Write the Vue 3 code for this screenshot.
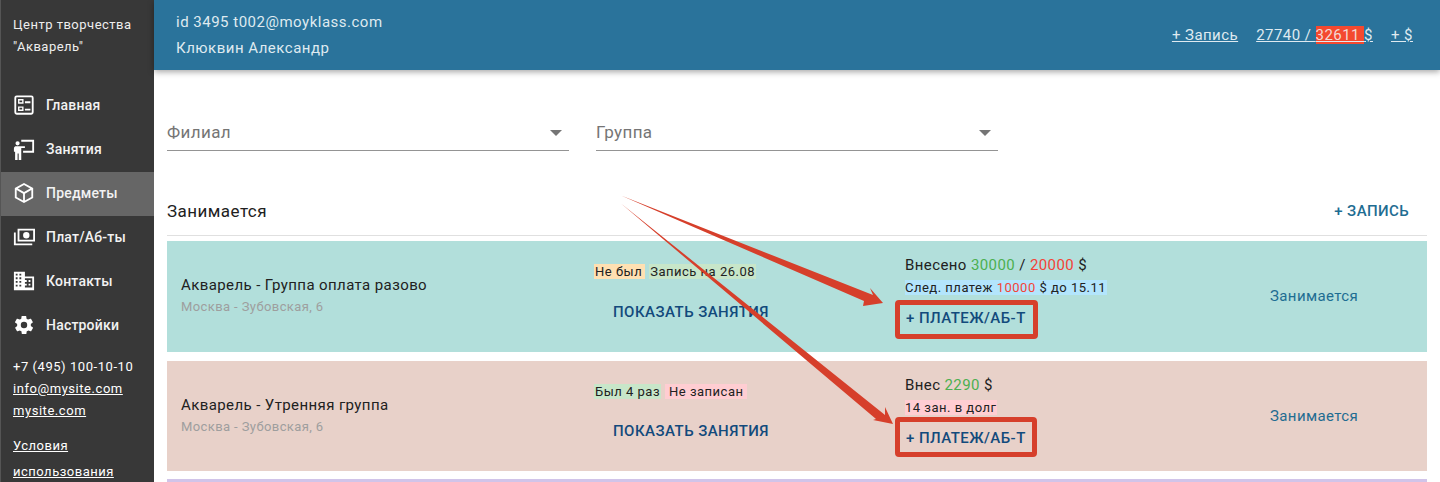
<script setup>
const nav = [
  { label: 'Главная', icon: 'home' },
  { label: 'Занятия', icon: 'lesson' },
  { label: 'Предметы', icon: 'box', active: true },
  { label: 'Плат/Аб-ты', icon: 'money' },
  { label: 'Контакты', icon: 'domain' },
  { label: 'Настройки', icon: 'gear' }
]
</script>

<template>
  <div class="app">
    <aside class="side">
      <div class="brand">Центр творчества<br>"Акварель"</div>
      <nav class="nav">
        <a v-for="n in nav" :key="n.label" class="nav-item" :class="{ active: n.active }">
          <svg class="ico" viewBox="0 0 24 24" fill="#fff">
            <path v-if="n.icon === 'home'" fill-rule="evenodd" d="M4 1.500h16A2.500 2.500 0 0 1 22.500 4v16a2.500 2.500 0 0 1-2.500 2.500H4A2.500 2.500 0 0 1 1.500 20V4A2.500 2.500 0 0 1 4 1.500zm0 2a.5.5 0 0 0-.5.5v16c0 .3.2.5.5.5h16c.3 0 .5-.2.5-.5V4c0-.3-.2-.5-.5-.5H4zM5.500 5.500h6v5h-6zm1.500 1.500v2h3V7zm-1.500 6.500h6v5h-6zm1.500 1.500v2h3v-2zm6-7h6v2h-6zm0 8h6v2h-6z"/>
            <path v-else-if="n.icon === 'lesson'" d="M9 2h14v14H11v-2h10V4H9zM5 3.500a2.300 2.300 0 1 1 0 4.600 2.300 2.300 0 0 1 0-4.600zM2.500 9h6.200l4.300-.1V11H9v13H6.200v-7H5v7H2.300v-9H1v-3.500A2.500 2.500 0 0 1 2.500 9z"/>
            <path v-else-if="n.icon === 'box'" fill-rule="evenodd" d="M12 1l10 5.500v11L12 23 2 17.500v-11L12 1zm0 2.400L5.300 7.100 12 11l6.700-3.900L12 3.400zM4 8.800v7.500l7 3.900v-7.500L4 8.800zm16 0l-7 3.900v7.500l7-3.900V8.800z"/>
            <path v-else-if="n.icon === 'money'" fill-rule="evenodd" d="M5 3h19v14H5V3zm2 2v10h15V5H7zm7.500 1.500a3.500 3.500 0 1 1 0 7 3.500 3.500 0 0 1 0-7zM1 7h2v12h18v2H1V7z"/>
            <path v-else-if="n.icon === 'domain'" fill-rule="evenodd" d="M1 2h12v5h10v15H1V2zm2 2v2h2V4H3zm4 0v2h2V4H7zm-4 4v2h2V8H3zm4 0v2h2V8H7zm-4 4v2h2v-2H3zm4 0v2h2v-2H7zm-4 4v2h2v-2H3zm4 0v2h2v-2H7zm6-7v2h2v2h-2v2h2v2h-2v2h8V9h-8zm4 2h2v2h-2v-2zm0 4h2v2h-2v-2z"/>
            <path v-else fill-rule="evenodd" d="M19.400 13c.1-.3.100-.7.100-1s0-.7-.1-1l2.100-1.600c.2-.2.2-.4.1-.6l-2-3.500c-.1-.2-.4-.3-.6-.2l-2.500 1c-.5-.4-1.100-.7-1.700-1l-.4-2.600c0-.3-.2-.4-.5-.4h-4c-.3 0-.5.100-.5.400l-.4 2.600c-.6.300-1.200.6-1.700 1l-2.500-1c-.2-.1-.5 0-.6.200l-2 3.500c-.1.200-.1.400.1.600L4.600 11c-.1.300-.1.700-.1 1s0 .7.100 1l-2.100 1.600c-.2.200-.2.400-.1.600l2 3.500c.1.200.4.300.6.200l2.500-1c.5.400 1.100.7 1.700 1l.4 2.600c0 .3.200.4.500.4h4c.3 0 .5-.1.500-.4l.4-2.600c.6-.3 1.200-.6 1.700-1l2.500 1c.2.100.5 0 .6-.2l2-3.500c.1-.2.100-.4-.1-.6L19.400 13zM12 15.500a3.500 3.500 0 1 1 0-7 3.500 3.500 0 0 1 0 7z"/>
          </svg>
          <span>{{ n.label }}</span>
        </a>
      </nav>
      <div class="contacts">
        <div>+7 (495) 100-10-10</div>
        <a>info@mysite.com</a>
        <a>mysite.com</a>
      </div>
      <div class="terms"><a>Условия</a><br><a>использования</a></div>
    </aside>

    <div class="main">
      <header class="top">
        <div class="who">
          <div>id 3495 t002@moyklass.com</div>
          <div>Клюквин Александр</div>
        </div>
        <div class="top-links">
          <a>+ Запись</a>
          <a>27740 / <span class="over">32611 </span> $</a>
          <a>+ $</a>
        </div>
      </header>

      <div class="content">
        <div class="filters">
          <div class="select">Филиал<i class="caret"></i></div>
          <div class="select">Группа<i class="caret"></i></div>
        </div>

        <div class="sec-head">
          <span>Занимается</span>
          <a class="add">+ ЗАПИСЬ</a>
        </div>

        <div class="row teal">
          <div class="c-name">
            <div class="name">Акварель - Группа оплата разово</div>
            <div class="place">Москва - Зубовская, 6</div>
          </div>
          <div class="c-tags">
            <div class="tags"><span class="tag orange">Не был</span><span class="tag green">Запись на 26.08</span></div>
            <a class="btn show">ПОКАЗАТЬ ЗАНЯТИЯ</a>
          </div>
          <div class="c-pay">
            <div class="sum">Внесено <b class="g">30000</b> / <b class="r">20000</b> $</div>
            <div class="note"><span class="blue">След. платеж <b class="r">10000</b> $ до 15.11</span></div>
            <a class="btn pay">+ ПЛАТЕЖ/АБ-Т</a>
          </div>
          <div class="status">Занимается</div>
        </div>

        <div class="row rose">
          <div class="c-name">
            <div class="name">Акварель - Утренняя группа</div>
            <div class="place">Москва - Зубовская, 6</div>
          </div>
          <div class="c-tags">
            <div class="tags"><span class="tag green">Был 4 раз</span><span class="tag pink">Не записан</span></div>
            <a class="btn show">ПОКАЗАТЬ ЗАНЯТИЯ</a>
          </div>
          <div class="c-pay">
            <div class="sum">Внес <b class="g">2290</b> $</div>
            <div class="note"><span class="pinkbg">14 зан. в долг</span></div>
            <a class="btn pay">+ ПЛАТЕЖ/АБ-Т</a>
          </div>
          <div class="status">Занимается</div>
        </div>

        <div class="row violet"></div>
      </div>
    </div>

    <svg class="marks" width="1440" height="482" viewBox="0 0 1440 482">
      <g fill="#d63f2b">
        <path d="M621 195.500L873 295 870 288 883 303 863 306 864 301z"/>
        <path d="M621 203.500L885 415 885 407 893 424 873 420 876 419z"/>
      </g>
      <g fill="none" stroke="#d63f2b" stroke-width="5">
        <rect x="897.500" y="302.500" width="138" height="34" rx="1.500"/>
        <rect x="897.500" y="419.500" width="137" height="35" rx="1.500"/>
      </g>
    </svg>
  </div>
</template>

<style>
html, body { margin: 0; background: #fff; overflow: hidden; }
</style>

<style scoped>
.app { position: relative; display: flex; height: 482px; overflow: hidden; font-family: Roboto, "Noto Sans", sans-serif; color: #212121; }
.side { width: 154px; flex: none; background: #383838; color: #fff; border-left: 1px solid #555; box-sizing: border-box; }
.brand { padding: 14px 0 0 12px; font-size: 13px; line-height: 22px; letter-spacing: .5px; height: 84px; box-sizing: border-box; color: #eee; }
.nav-item { display: flex; align-items: center; height: 44px; box-sizing: border-box; padding: 0 0 2px 12px; font-size: 14px; font-weight: 500; letter-spacing: .2px; color: #f2f2f2; }
.nav-item.active { background: #666; }
.ico { width: 22px; height: 22px; margin-right: 11px; flex: none; }
.contacts { padding: 8px 0 0 12px; font-size: 13px; line-height: 22px; letter-spacing: .55px; }
.contacts a { display: block; text-decoration: underline; }
.terms { padding: 11px 0 0 12px; font-size: 13px; line-height: 26px; letter-spacing: .5px; }
.terms a { text-decoration: underline; }
.main { flex: 1; min-width: 0; }
.top { height: 70px; background: #2a739b; color: #dfeaf0; display: flex; justify-content: space-between; align-items: center; padding: 0 27px 0 22px; box-shadow: 0 2px 6px rgba(0,0,0,.35); box-sizing: border-box; position: relative; font-size: 15px; letter-spacing: .5px; }
.who { line-height: 26px; }
.top-links { display: flex; gap: 18px; letter-spacing: .45px; }
.top-links a { text-decoration: underline; }
.over { background: #f4492f; color: #f3d9d4; }
.content { padding: 0 13px; }
.filters { display: flex; gap: 27px; padding-top: 44px; }
.select { width: 402px; height: 37px; box-sizing: border-box; border-bottom: 1px solid #949494; color: #757575; font-size: 17px; letter-spacing: .4px; line-height: 36px; position: relative; }
.caret { position: absolute; right: 7px; top: 16px; border-left: 6px solid transparent; border-right: 6px solid transparent; border-top: 6px solid #757575; }
.sec-head { display: flex; justify-content: space-between; align-items: center; height: 85px; box-sizing: border-box; border-bottom: 1px solid #e0e0e0; font-size: 17px; letter-spacing: .45px; padding: 36px 18px 0 0; }
.add { color: #1f6d92; font-size: 15px; font-weight: 500; letter-spacing: .4px; }
.row { display: flex; margin-top: 9px; height: 110px; font-size: 15px; letter-spacing: .4px; }
.teal { background: #b2dfdb; height: 111px; margin-top: 5px; }
.rose { background: #e8d1c9; }
.violet { background: #d1c4e9; margin-top: 8px; }
.c-name { width: 427px; box-sizing: border-box; padding: 35px 0 0 14px; }
.name { line-height: 18px; }
.place { font-size: 13px; color: #9e9e9e; margin-top: 5px; line-height: 15px; }
.c-tags { width: 311px; }
.tags { display: flex; gap: 4px; font-size: 13px; padding-top: 23px; line-height: 15px; letter-spacing: .5px; }
.tag { padding: 0 1px; }
.orange { background: #ffe0b2; padding-right: 3px; }
.green { background: #c8e6c9; }
.pink { background: #ffcdd2; padding: 0 4px; }
.btn { font-weight: 500; font-size: 15px; letter-spacing: .45px; color: #124a7c; display: block; }
.show { margin: 23px 0 0 19px; line-height: 18px; }
.teal .show { margin-top: 24px; }
.c-pay { width: 365px; }
.sum { padding-top: 15px; line-height: 18px; }
.sum b { font-weight: 400; }
.note { font-size: 13px; line-height: 15px; margin-top: 6px; letter-spacing: .5px; }
.blue { background: #b3e5fc; display: inline-block; width: 202px; }
.pinkbg { background: #ffcdd2; padding-right: 1px; }
.g { color: #4caf50; }
.r { color: #f44336; font-weight: 400; }
.pay { margin: 14px 0 0 1px; line-height: 18px; }
.status { color: #1f6d92; padding-top: 46px; line-height: 18px; }
.marks { position: absolute; left: 0; top: 0; pointer-events: none; }
</style>
